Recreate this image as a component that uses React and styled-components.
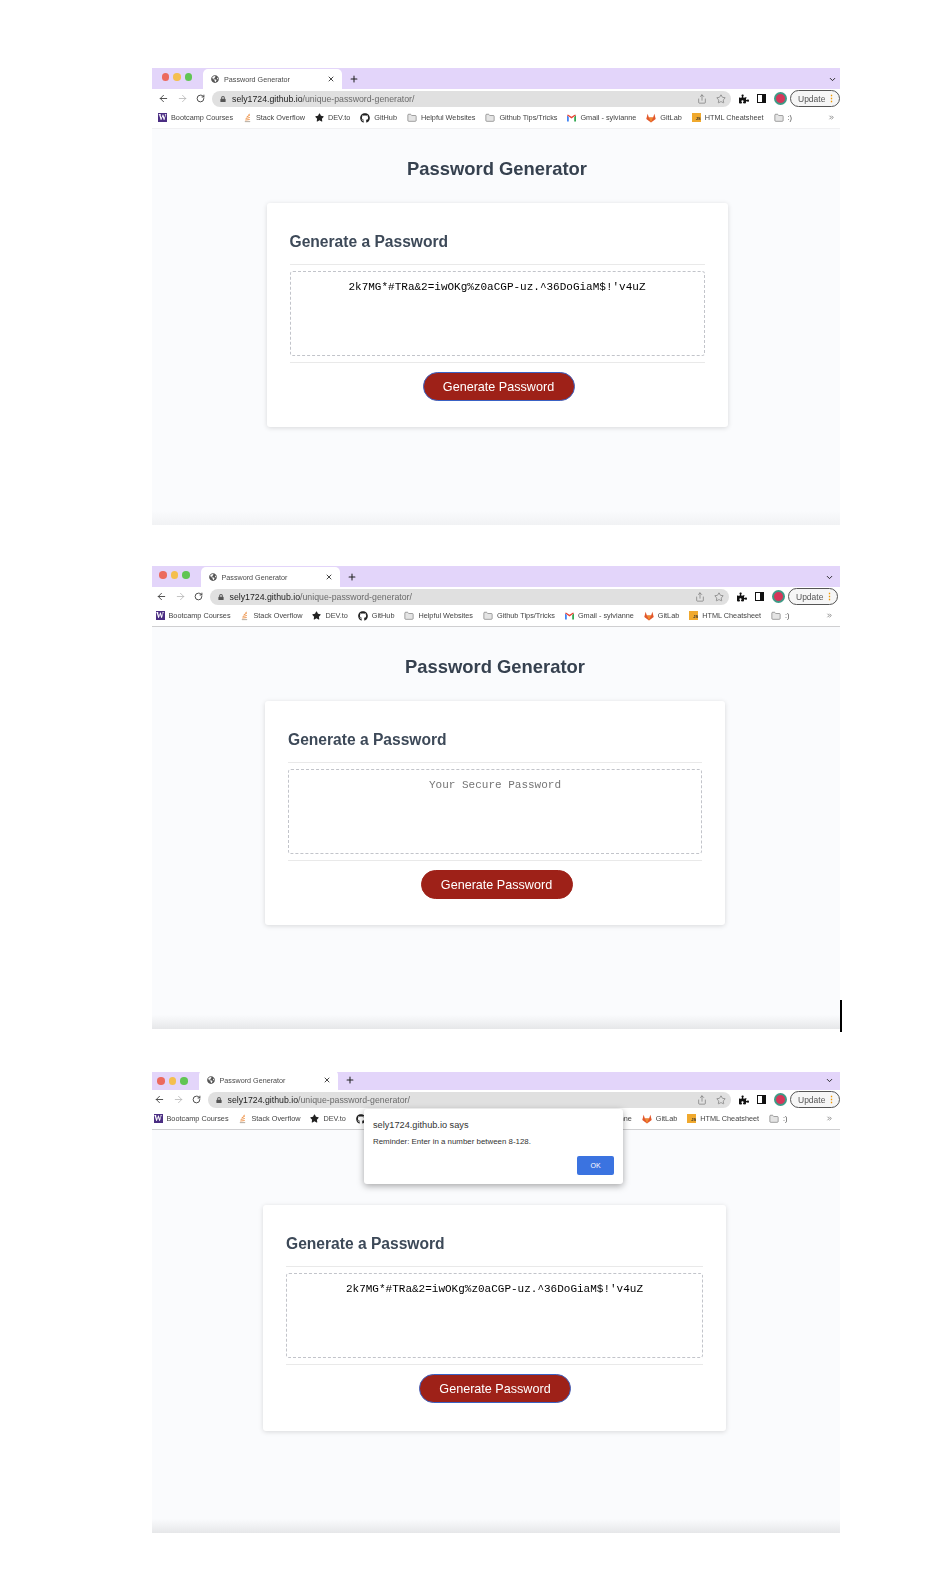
import React from 'react';
import styled, { createGlobalStyle } from 'styled-components';
import { ArrowLeft, ArrowRight, RotateCw, Share, Star, Plus, X, ChevronDown, ChevronsRight, Folder } from 'lucide-react';
import { FaGithub, FaStar, FaPuzzlePiece, FaLock, FaGlobeAmericas } from 'react-icons/fa';

const GlobalStyle = createGlobalStyle`
  html, body {
    margin: 0;
    padding: 0;
    background: #fff;
    font-family: "Liberation Sans", Arial, sans-serif;
  }
`;

const Page = styled.div`
  width: 938px;
  height: 1578px;
  padding: 68px 0 0 152px;
  box-sizing: border-box;
  display: flex;
  flex-direction: column;
  gap: 41px;
`;

const Shot = styled.section`
  position: relative;
  width: 688px;
  margin-top: ${p => p.$top || 0}px;
`;

const Frame = styled.div`
  display: flex;
  flex-direction: column;
  overflow: hidden;
  filter: blur(0.25px);
`;

const TabStrip = styled.div`
  height: ${p => p.$height}px;
  background: #e3d5fa;
  display: flex;
  align-items: flex-end;
  padding-left: ${p => 9.5 - p.$shift}px;
  padding-right: ${p => (p.$shift ? 6 : 3)}px;
`;

const Lights = styled.div`
  display: flex;
  gap: 4px;
  align-self: flex-start;
  margin: 5px 11px 0 0;
`;

const Light = styled.span`
  width: 7.5px;
  height: 7.5px;
  border-radius: 50%;
  background: ${p => p.$color};
`;

const Tab = styled.div`
  width: 139px;
  height: 20px;
  box-sizing: border-box;
  background: #fff;
  border-radius: 5px 5px 0 0;
  display: flex;
  align-items: center;
  padding: 0 7px 0 8px;
  color: #4a4a4a;
  font-size: 7.2px;
  gap: 5px;
`;

const TabTitle = styled.span`
  flex: 1;
  white-space: nowrap;
`;

const NewTab = styled.div`
  display: flex;
  align-items: center;
  height: 20px;
  margin-left: 7px;
  flex: 1;
  color: #222;
`;

const ToolBar = styled.div`
  height: 19px;
  background: #fff;
  display: flex;
  align-items: center;
  padding-left: ${p => 6 - p.$shift}px;
  padding-right: ${p => p.$end}px;
  color: #444;
`;

const NavIcons = styled.div`
  display: flex;
  align-items: center;
  gap: 8px;
  width: 54px;
  flex: none;
`;

const Omnibox = styled.div`
  flex: 1;
  height: 16px;
  border-radius: 8px;
  background: #e0e0e0;
  display: flex;
  align-items: center;
  padding: 0 5px 0 8px;
  gap: 6px;
  font-size: 8.75px;
  color: #6a6a6a;
  white-space: nowrap;
`;

const Host = styled.span`
  color: #222;
`;

const UrlText = styled.span`
  flex: 1;
`;

const ToolActions = styled.div`
  display: flex;
  align-items: center;
  gap: 8px;
  flex: none;
  margin-left: 8px;
`;

const SidePanel = styled.span`
  width: 9px;
  height: 9px;
  box-sizing: border-box;
  border: 1.5px solid #111;
  border-right-width: 4.5px;
`;

const Avatar = styled.span`
  width: 13px;
  height: 13px;
  box-sizing: border-box;
  border-radius: 50%;
  background: #d6365a;
  border: 2px solid #3f9a86;
`;

const UpdatePill = styled.div`
  width: 50px;
  height: 17px;
  box-sizing: border-box;
  border: 1px solid #555;
  border-radius: 9px;
  background: #f6f6f6;
  display: flex;
  align-items: center;
  justify-content: space-between;
  padding: 0 3px 0 7px;
  font-size: 8.5px;
  color: #555;
  margin-left: -4.5px;
`;

const Dots = styled.span`
  color: #f29900;
  font-weight: bold;
  font-size: 9px;
`;

const BookmarkBar = styled.div`
  height: 21px;
  box-sizing: border-box;
  background: #fff;
  display: flex;
  align-items: center;
  padding: 0 ${p => (p.$shift ? 7 : 5)}px 1px ${p => 6 - p.$shift}px;
  gap: 9.9px;
  font-size: 7.3px;
  color: #444;
  white-space: nowrap;
  border-bottom: 1px solid ${p => p.$line};
`;

const Bookmark = styled.div`
  display: flex;
  align-items: center;
  gap: 4px;
`;

const MoreMarks = styled.div`
  margin-left: auto;
  display: flex;
  color: #444;
`;

const WBox = styled.span`
  width: 9px;
  height: 9px;
  background: #4b2e83;
  color: #fff;
  font-size: 8px;
  line-height: 9px;
  text-align: center;
  font-weight: bold;
  font-family: "Liberation Serif", serif;
`;

const JsBox = styled.span`
  width: 9px;
  height: 9px;
  background: #f0a92e;
  color: #333;
  font-size: 4px;
  line-height: 11px;
  text-align: right;
  font-weight: bold;
`;

const Content = styled.main`
  height: ${p => p.$height}px;
  box-sizing: border-box;
  background: linear-gradient(to bottom, #fafbfd calc(100% - 14px), ${p => p.$fade});
  display: flex;
  flex-direction: column;
  align-items: center;
  padding: 28px ${p => p.$right || 0}px 0 ${p => p.$left || 0}px;
`;

const PageTitle = styled.h1`
  margin: 0 0 22px;
  font-size: 18.4px;
  line-height: 24px;
  font-weight: bold;
  color: #36414f;
`;

const Card = styled.div`
  width: ${p => p.$width}px;
  height: ${p => p.$height}px;
  margin-top: ${p => p.$top}px;
  box-sizing: border-box;
  background: #fff;
  border-radius: 3px;
  box-shadow: 0 1px 5px rgba(0, 0, 0, 0.14);
  padding: 28px 23px 0;
  display: flex;
  flex-direction: column;
  align-items: center;
`;

const CardTitle = styled.h2`
  margin: 0;
  align-self: stretch;
  height: 33px;
  border-bottom: 1px solid #e9e9e9;
  font-size: 15.6px;
  line-height: 22px;
  font-weight: bold;
  color: #3d4958;
`;

const PasswordBox = styled.textarea`
  display: block;
  align-self: stretch;
  height: 85px;
  box-sizing: border-box;
  margin: 6px 0;
  padding: 8px 12px;
  border: 1px dashed #c2c4ca;
  border-radius: 3px;
  background: #fff;
  resize: none;
  outline: none;
  overflow: hidden;
  text-align: center;
  font-family: "Liberation Mono", monospace;
  font-size: 11px;
  line-height: 14px;
  color: #000;
  &::placeholder {
    color: #757575;
  }
`;

const CardRule = styled.div`
  align-self: stretch;
  height: 1px;
  background: #e9e9e9;
`;

const GenerateButton = styled.button`
  margin: 9px 0 0 ${p => p.$nudge}px;
  width: 152px;
  height: 29px;
  border-radius: 15px;
  border: 1px solid ${p => (p.$focused ? '#3a62c4' : '#9e2118')};
  background: #9e2118;
  color: #fff;
  font-family: "Liberation Sans", Arial, sans-serif;
  font-size: 12.6px;
  padding: 0;
`;

const AlertDialog = styled.div`
  position: absolute;
  left: 212px;
  top: 37px;
  width: 259px;
  height: 75px;
  box-sizing: border-box;
  background: #fff;
  border-radius: 3px;
  box-shadow: 0 2px 7px rgba(0, 0, 0, 0.35);
  padding: 11px 9px;
  color: #333;
`;

const AlertTitle = styled.div`
  font-size: 9.2px;
  line-height: 11px;
  margin-bottom: 6px;
`;

const AlertText = styled.div`
  font-size: 7.9px;
  line-height: 10px;
`;

const AlertOk = styled.div`
  position: absolute;
  right: 9px;
  bottom: 9px;
  width: 37px;
  height: 19px;
  border-radius: 2px;
  background: #3b73e0;
  color: #fff;
  font-size: 7px;
  line-height: 19px;
  text-align: center;
`;

const CursorBar = styled.div`
  position: absolute;
  left: 100%;
  bottom: -3px;
  width: 2px;
  height: 32px;
  background: #000;
`;

const StackIcon = () => (
  <svg width="9" height="10" viewBox="0 0 10 10" fill="none">
    <path d="M2 9h6" stroke="#b9b2a8" strokeWidth="1.2" />
    <path d="M2.5 7.3l5-.6M3 5.6l4.6-1.2M4 3.9l3.6-2M5.4 2.2L7.6.6" stroke="#ef9a55" strokeWidth="1.1" />
  </svg>
);

const GmailIcon = () => (
  <svg width="9" height="8" viewBox="0 0 10 8">
    <path d="M0 1v7h2V3z" fill="#4285f4" />
    <path d="M8 3v5h2V1z" fill="#34a853" />
    <path d="M0 1l5 3.6L10 1 9 0 5 2.6 1 0z" fill="#ea4335" />
  </svg>
);

const GitlabIcon = () => (
  <svg width="10" height="10" viewBox="0 0 10 10">
    <path d="M5 9.5L.3 6 1.6.8l1.3 3.6h4.2L8.4.8 9.7 6z" fill="#e2572b" />
    <path d="M5 9.5L2.9 4.4h4.2z" fill="#f08a33" />
  </svg>
);

const FolderIcon = () => <Folder size={10} color="#666" fill="#e4e4e4" strokeWidth={1.4} />;

const marks = [
  { label: 'Bootcamp Courses', icon: <WBox>W</WBox> },
  { label: 'Stack Overflow', icon: <StackIcon /> },
  { label: 'DEV.to', icon: <FaStar size={9} color="#222" /> },
  { label: 'GitHub', icon: <FaGithub size={10} color="#222" /> },
  { label: 'Helpful Websites', icon: <FolderIcon /> },
  { label: 'Github Tips/Tricks', icon: <FolderIcon /> },
  { label: 'Gmail - sylvianne', icon: <GmailIcon /> },
  { label: 'GitLab', icon: <GitlabIcon /> },
  { label: 'HTML Cheatsheet', icon: <JsBox>JS</JsBox> },
  { label: ':)', icon: <FolderIcon /> },
];

const Browser = ({ strip, shift, end, line, fade, height, left, right, children }) => (
  <Frame>
    <TabStrip $height={strip} $shift={shift}>
      <Lights>
        <Light $color="#ec6a5e" />
        <Light $color="#f4bf4f" />
        <Light $color="#61c554" />
      </Lights>
      <Tab>
        <FaGlobeAmericas size={8} color="#555" />
        <TabTitle>Password Generator</TabTitle>
        <X size={8} color="#222" strokeWidth={2.5} />
      </Tab>
      <NewTab>
        <Plus size={10} strokeWidth={2.5} />
        <ChevronDown size={9} strokeWidth={2.5} style={{ marginLeft: 'auto' }} />
      </NewTab>
    </TabStrip>
    <ToolBar $shift={shift} $end={end}>
      <NavIcons>
        <ArrowLeft size={11} strokeWidth={2} />
        <ArrowRight size={11} strokeWidth={1.5} color="#aaa" />
        <RotateCw size={9} strokeWidth={2.5} />
      </NavIcons>
      <Omnibox>
        <FaLock size={6} color="#555" />
        <UrlText><Host>sely1724.github.io</Host>/unique-password-generator/</UrlText>
        <Share size={10} strokeWidth={1.5} />
        <Star size={10} strokeWidth={1.5} style={{ marginLeft: 2.5 }} />
      </Omnibox>
      <ToolActions>
        <FaPuzzlePiece size={10} color="#111" />
        <SidePanel />
        <Avatar />
        <UpdatePill>Update<Dots>⋮</Dots></UpdatePill>
      </ToolActions>
    </ToolBar>
    <BookmarkBar $shift={shift} $line={line}>
      {marks.map(m => (
        <Bookmark key={m.label}>{m.icon}{m.label}</Bookmark>
      ))}
      <MoreMarks><ChevronsRight size={7} strokeWidth={2} /></MoreMarks>
    </BookmarkBar>
    <Content $height={height} $left={left} $right={right} $fade={fade}>
      {children}
    </Content>
  </Frame>
);

const PASSWORD = "2k7MG*#TRa&2=iwOKg%z0aCGP-uz.^36DoGiaM$!'v4uZ";

const GeneratorCard = ({ width, height = 224, top = 0, nudge = 3, value, focused }) => (
  <Card $width={width} $height={height} $top={top}>
    <CardTitle>Generate a Password</CardTitle>
    <PasswordBox readOnly value={value} placeholder="Your Secure Password" />
    <CardRule />
    <GenerateButton $focused={focused} $nudge={nudge}>Generate Password</GenerateButton>
  </Card>
);

export default function App() {
  return (
    <>
      <GlobalStyle />
      <Page>
        <Shot>
          <Browser strip={21} shift={0} end={0} line="#f0f0f2" fade="#f1f2f4" height={396} left={2}>
            <PageTitle>Password Generator</PageTitle>
            <GeneratorCard width={461} value={PASSWORD} focused />
          </Browser>
        </Shot>
        <Shot>
          <Browser strip={21} shift={2.5} end={2} line="#cfcfd1" fade="#e6e7e9" height={402} right={2}>
            <PageTitle>Password Generator</PageTitle>
            <GeneratorCard width={460} value="" />
          </Browser>
          <CursorBar />
        </Shot>
        <Shot $top={2}>
          <Browser strip={18} shift={4.5} end={0} line="#cfcfd1" fade="#e6e7e9" height={403} right={3}>
            <PageTitle>Password Generator</PageTitle>
            <GeneratorCard width={463} height={226} top={1} nudge={1} value={PASSWORD} focused />
          </Browser>
          <AlertDialog>
            <AlertTitle>sely1724.github.io says</AlertTitle>
            <AlertText>Reminder: Enter in a number between 8-128.</AlertText>
            <AlertOk>OK</AlertOk>
          </AlertDialog>
        </Shot>
      </Page>
    </>
  );
}
